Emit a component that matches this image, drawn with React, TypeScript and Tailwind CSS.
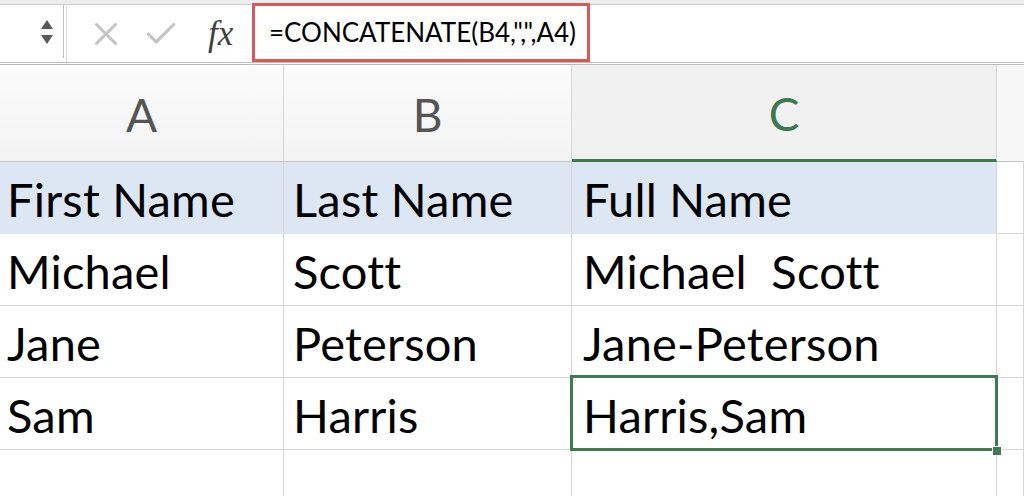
import { X, Check } from "lucide-react";

const rows = [
  ["Michael", "Scott", "Michael  Scott"],
  ["Jane", "Peterson", "Jane-Peterson"],
  ["Sam", "Harris", "Harris,Sam"],
];

function FormulaBar() {
  return (
    <div className="h-[65px] flex flex-col bg-white">
      <div className="h-[7px] bg-[#ededed] border-b border-[#cfcfcf]" />
      <div className="flex-1 flex items-stretch border-b-[3px] border-double border-[#bcbcbc]">
        <div className="w-[64px] h-[53px] border-r border-[#bdbdbd] flex items-center justify-end pr-[10px]">
          <div className="flex flex-col items-center gap-[6px]">
            <svg width="12" height="9" viewBox="0 0 12 9">
              <path d="M6 0 L12 9 L0 9 Z" fill="#585858" />
            </svg>
            <svg width="12" height="9" viewBox="0 0 12 9">
              <path d="M0 0 L12 0 L6 9 Z" fill="#585858" />
            </svg>
          </div>
        </div>
        <div className="w-[3px] border-r border-[#d8d8d8]" />
        <div className="w-[185px] flex items-center pl-[20px]">
          <X className="w-[38px] h-[38px] text-[#c4c4c4]" strokeWidth={2} />
          <Check className="w-[38px] h-[38px] text-[#c4c4c4] ml-[17px]" strokeWidth={2} />
          <span className="ml-[28px] font-['Liberation_Serif',serif] italic text-[35px] text-[#3e3e3e] leading-none">
            fx
          </span>
        </div>
        <div className="w-[338px] -mt-[2px] h-[59px] border-[3px] border-[#d9585a] flex items-center pl-[14px] text-[26px] text-black whitespace-pre">
          =CONCATENATE(B4,",",A4)
        </div>
      </div>
    </div>
  );
}

function ColHeader({ label, active }: { label: string; active?: boolean }) {
  return (
    <div
      className={
        active
          ? "h-[97px] flex items-center justify-center bg-[#f1f1f1] border-r border-[#d6d6d6] border-b-[3px] border-b-[#3c7a4f] text-[#3c7a4f] text-[46px] pt-[2px]"
          : "h-[97px] flex items-center justify-center bg-gradient-to-b from-[#fbfbfb] to-[#f3f3f3] border-r border-[#d6d6d6] border-b border-b-[#c4c4c4] text-[#555555] text-[46px] pt-[2px]"
      }
    >
      {label}
    </div>
  );
}

function Cell({ text, blue, pl }: { text?: string; blue?: boolean; pl: string }) {
  return (
    <div
      className={`h-[72px] flex items-end pb-[10px] ${pl} border-r border-b border-[#d6d6d6] text-[47px] text-black leading-none whitespace-pre tracking-[0.2px] ${
        blue ? "bg-[#dde7f3] border-b-[#dde7f3]" : "bg-white"
      }`}
    >
      {text}
    </div>
  );
}

export default function App() {
  return (
    <div className="w-[1024px] h-[496px] overflow-hidden bg-white font-['Lato',sans-serif]">
      <FormulaBar />
      <div className="relative grid grid-cols-[284px_288px_425px_1fr]">
        <ColHeader label="A" />
        <ColHeader label="B" />
        <ColHeader label="C" active />
        <div className="h-[97px] bg-[#f7f7f7] border-b border-[#c4c4c4]" />

        <Cell text="First Name" blue pl="pl-[7px]" />
        <Cell text="Last Name" blue pl="pl-[9px]" />
        <Cell text="Full Name" blue pl="pl-[11px]" />
        <Cell pl="pl-0" />

        {rows.map((r, i) => (
          <div key={i} className="contents">
            <Cell text={r[0]} pl="pl-[7px]" />
            <Cell text={r[1]} pl="pl-[9px]" />
            <Cell text={r[2]} pl="pl-[11px]" />
            <Cell pl="pl-0" />
          </div>
        ))}

        <Cell pl="pl-0" />
        <Cell pl="pl-0" />
        <Cell pl="pl-0" />
        <Cell pl="pl-0" />

        {/* selected cell C5 */}
        <div className="absolute left-[570px] top-[310px] w-[428px] h-[76px] border-[3px] border-[#3f7a50] pointer-events-none" />
        <div className="absolute left-[992px] top-[381px] w-[10px] h-[10px] bg-[#3f7a50] border border-white" />
      </div>
    </div>
  );
}
